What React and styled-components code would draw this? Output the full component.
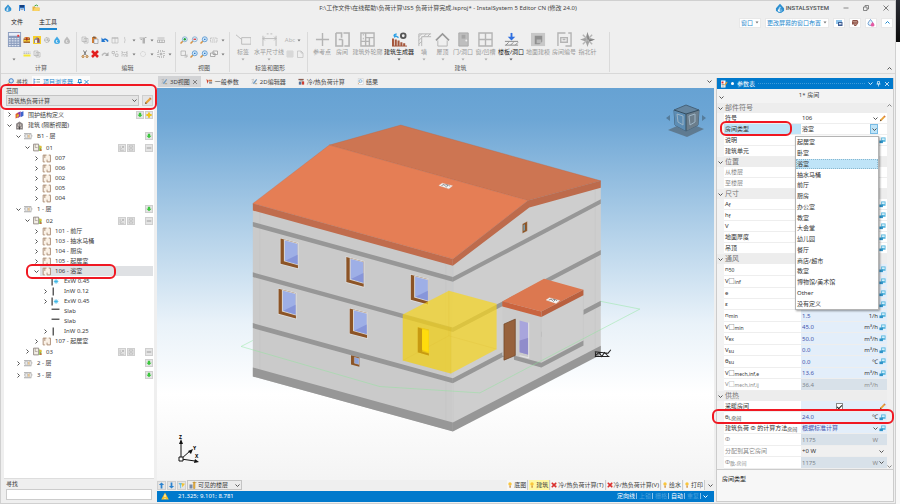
import React from "react";
import styled, { createGlobalStyle, css } from "styled-components";

const Global = createGlobalStyle`
  * { box-sizing: border-box; }
  html, body, #root { margin: 0; height: 100%; }
  body {
    font: 6px/8px "Noto Sans", "Noto Sans CJK SC", sans-serif;
    color: #3c3c3c;
    background: #f8f8f8;
    overflow: hidden;
  }
  button, input, select { font: inherit; color: inherit; margin: 0; padding: 0; border: 0; background: none; border-radius: 0; min-width: 0; }
  button { display: flex; align-items: center; justify-content: center; white-space: nowrap; }
  select { appearance: none; width: 100%; }
  svg { display: block; flex: none; }
`;

/* ---------- icons ---------- */

const glyphs = {
  save: <><path d="M2 2h12v12H2z" fill="#3a86d8" /><path d="M4 2h8v5H4z" fill="#173f7c" /><path d="M4 9h8v5H4z" fill="#e4ecf6" /><path d="M5 11h6" stroke="#567" /></>,
  open: <><path d="M1 14V5h5l1 2h8v7z" fill="#e8b43c" /><path d="M2 14l3-6h11l-3 6z" fill="#fad465" /><path d="M5 4q4-4 7 0" stroke="#43a838" strokeWidth="2" fill="none" /></>,
  logo: <><path d="M8 1L1.5 8.500v4L4 14.500 8 5l4 9.500 2.500-2v-4z" fill="#2c8fd0" /><path d="M8 5q-4 5-4 7a4 3.500 0 008 0q0-2-4-7z" fill="#fff" stroke="#2c8fd0" strokeWidth="1.500" /><path d="M7 9h5M7 11h5M7 13h5M9 8v6M11 8v6" stroke="#2c8fd0" /></>,
  calc: <><path d="M1 0h14v16H1z" fill="#8b9cbd" /><path d="M2 1h12v3H2z" fill="#e8eef8" /><path d="M11 3h2v2h-2z" fill="#e33" /><path d="M2 7h12M2 9.500h12M2 12h12M2 14.500h12" stroke="#dfe6f2" strokeWidth="1.200" strokeDasharray="2 1" /></>,
  book: <><path d="M1 5l13-2v11H1z" fill="#a4662b" /><path d="M1 8h13v3H1z" fill="#f2ce38" /><path d="M3 2h9v4H3z" fill="#d98b3e" /><path d="M6 3h3v6H6z" fill="#b12f22" /></>,
  houseY: <><path d="M0 0h16v16H0z" fill="#f8cf29" /><path d="M2 7l6-5 6 5v7H2z" fill="#8d8d9a" /><path d="M4 8h4v6H4z" fill="#f4eee6" /><path d="M9 4h3v9H9z" fill="#ad4c3d" /></>,
  fan: <><circle cx="8" cy="8" r="5" fill="none" stroke="#b8b8b8" strokeWidth="2" strokeDasharray="5 1" /><path d="M3 8h10M8 4l3 8" stroke="#aaa" strokeWidth="1.500" /></>,
  drop: <><path d="M8 1q-6 7-6 10a6 5 0 0012 0q0-3-6-10z" fill="#41a9e5" /><path d="M8 8q-3 4 1 6" stroke="#fff" strokeWidth="2" fill="none" /></>,
  dropG: <><path d="M8 1q-6 7-6 10a6 5 0 0012 0q0-3-6-10z" fill="#bcbcbc" /><path d="M8 8q-3 4 1 6" stroke="#eee" strokeWidth="2" fill="none" /></>,
  rowY: <><path d="M1 9h14v4H1z" fill="#f6e936" /><path d="M1 4h14M1 7h14" stroke="#8e9199" strokeDasharray="3 1" /></>,
  copy: <path d="M2 2h8v9H2zM6 5h8v9H6zM8 8h4M8 11h4" fill="#eee" stroke="#b0b0b0" strokeWidth="1.300" />,
  paste: <><path d="M2 2h9v12H2z" fill="#d67e32" /><path d="M4 1h5v3H4z" fill="#795d45" /><path d="M6 6h8v9H6z" fill="#ecf2fa" stroke="#777" /></>,
  undo: <><path d="M4 9q5-6 10 2" stroke="#2277d0" strokeWidth="3.500" fill="none" /><path d="M1 3v9h8z" fill="#2277d0" /></>,
  redo: <><path d="M12 9Q7 3 2 11" stroke="#bbb" strokeWidth="3" fill="none" /><path d="M15 4v8H8z" fill="#aaa" /></>,
  cols: <path d="M2 3h12v11H2zM8 3v11M2 5h12" fill="none" stroke="#b8b8b8" strokeWidth="1.300" />,
  brace: <path d="M6 2q3 1 1 4l2 2-2 2q2 3-1 4" fill="none" stroke="#c0c0c0" strokeWidth="1.500" />,
  spray: <><path d="M7 3h5v12H7z" fill="#b2b2b2" /><path d="M1 4h6M3 7h3M12 3h3" stroke="#b2b2b2" strokeWidth="2" /></>,
  table: <path d="M1 4h14M1 8h14v5H1zM5 8v5M10 8v5" fill="none" stroke="#aaa" strokeWidth="1.500" />,
  cut: <><path d="M5 1l5 9M11 1L6 10" stroke="#777" strokeWidth="2" /><circle cx="4" cy="13" r="2" fill="none" stroke="#b97527" strokeWidth="2" /><circle cx="12" cy="13" r="2" fill="none" stroke="#b97527" strokeWidth="2" /></>,
  del: <path d="M2 2l12 12M14 2L2 14" stroke="#e21f1f" strokeWidth="5" />,
  dots: <path d="M2 3h5v4H2zM9 8h5v5H9zM4 10h3M10 3h3" fill="none" stroke="#b6b6b6" strokeWidth="1.500" />,
  align: <path d="M2 2v12M2 5h10v4H2M5 12h9M12 2v12" fill="none" stroke="#b0b0b0" strokeDasharray="3 1" strokeWidth="1.400" />,
  circle: <circle cx="8" cy="8" r="5" fill="none" stroke="#c0c0c0" strokeDasharray="2 1" strokeWidth="1.300" />,
  select: <><path d="M2 2h12v12H2z" fill="none" stroke="#777" strokeWidth="1.500" strokeDasharray="2 2" /><path d="M8 5v6M5 8h6" stroke="#777" /></>,
  zoomIn: <><path d="M1 15l5-5" stroke="#d79345" strokeWidth="3" /><circle cx="9.500" cy="6.500" r="5" fill="#d9ecfa" stroke="#7ca6ca" strokeWidth="1.500" /><path d="M9.500 4v5M7 6.500h5" stroke="#24a239" strokeWidth="2.500" /></>,
  zoomOut: <><path d="M1 15l5-5" stroke="#d79345" strokeWidth="3" /><circle cx="9.500" cy="6.500" r="5" fill="#d9ecfa" stroke="#7ca6ca" strokeWidth="1.500" /><path d="M7 6.500h5" stroke="#d33" strokeWidth="2.500" /></>,
  zoomFit: <><path d="M1 15l5-5" stroke="#d79345" strokeWidth="3" /><circle cx="9.500" cy="6.500" r="5" fill="#cfe6fa" stroke="#4e8fcb" strokeWidth="1.500" /><path d="M8 6.500h3" stroke="#357fc6" strokeWidth="2.500" /></>,
  rect: <path d="M1 4h13v8H1zM4 8h6" fill="none" stroke="#b6b6b6" strokeDasharray="3 1" strokeWidth="1.400" />,
  hand: <path d="M2 2h9v9H2zM10 9l4 4M14 9v5H9" fill="none" stroke="#aaa" strokeWidth="1.400" />,
  windows: <path d="M6 2h9v7H6zM1 6h9v7H1z" fill="#f4f4f4" stroke="#888" strokeWidth="1.300" />,
  sheet: <path d="M2 2h12v12H2zM2 6h12M2 10h12M6 2v12M10 2v12" fill="none" stroke="#bbb" />,
  page: <path d="M3 2h7l4 4v9H3zM10 2v4h4" fill="none" stroke="#bbb" strokeWidth="1.300" />,
  pencil: <><path d="M2 14l1-4 9-9 3 3-9 9z" fill="#e9a23a" /><path d="M2 14l1-4 3 3z" fill="#67513b" /><path d="M11 2l3 3 1-1-3-3z" fill="#c65b4b" /></>,
  find: <><path d="M1 15l5-5" stroke="#e09a46" strokeWidth="3" /><circle cx="9.500" cy="6.500" r="5" fill="#cfe3f7" stroke="#3273bd" strokeWidth="2" /></>,
  list: <><path d="M2 1v13M2 3h3M2 8h3M2 13h3" stroke="#4d86d0" strokeWidth="1.500" /><path d="M7 3h7M7 8h7M7 13h7" stroke="#8aa" strokeWidth="2" /></>,
  defs: <><path d="M1 7l5-3v9l-5 2z" fill="#e25b2e" /><path d="M5 5l5-3v9l-5 3z" fill="#8d3bac" /><path d="M10 4l5-2v8l-5 3z" fill="#3d63cc" /><path d="M3 9l4-2v4l-4 2z" fill="#e2ba2c" /></>,
  building: <><path d="M2 5l6-4 6 4v10H2z" fill="#8a8484" /><path d="M5 6h2v2H5zM9 6h2v2H9zM4 10h2v2H4zM10 10h2v2h-2z" fill="#f2e7dd" /><path d="M7 10h2v5H7z" fill="#4c4848" /></>,
  floor: <><path d="M0 3h13M0 7h15M0 12h13" stroke="#999" strokeWidth="1.500" /><path d="M2 4h4v7H2zM9 4h4v7H9z" fill="#eee" stroke="#aaa" /><path d="M7 5h3v5H7z" fill="#e6c493" /></>,
  unit: <><path d="M1 2h9v12H1z" fill="#f2ede5" stroke="#8c837c" strokeWidth="1.500" /><path d="M4 2v6h4" fill="none" stroke="#8c837c" /><path d="M11 4l4 2v8h-4z" fill="#8bbd44" /><path d="M12 5h3v4h-3z" fill="#e7bb35" /><path d="M13 11h2v3h-2z" fill="#d8503c" /></>,
  room: <><path d="M2 1h13v14H2z" fill="#faf1e6" /><path d="M5 14H2V2h6M12 2h3v12H9M9 14v-4M5 2v5" fill="none" stroke="#a88a73" strokeWidth="1.600" /></>,
  wall: <path d="M4 1v14" stroke="#555" strokeWidth="2.500" />,
  extWall: <><path d="M2 1v14" stroke="#555" strokeWidth="2.500" /><path d="M9 4v8M5 8h8M6 5l6 6M12 5l-6 6" stroke="#34b4e5" strokeWidth="1.500" /></>,
  slab: <path d="M1 4h14" stroke="#555" strokeWidth="2.500" />,
  addG: <path d="M5 2h6v5h4l-7 7-7-7h4z" fill="#3cc63e" />,
  addY: <path d="M5.500 1h5v4.500H15v5h-4.500V15h-5v-4.500H1v-5h4.500z" fill="#efc419" />,
  minus: <path d="M2 8h12" stroke="#999" strokeWidth="2.500" />,
  view: <path d="M3 2v12h10M6 10l6-6M8 4h4v4" fill="none" stroke="#a6a6a6" strokeWidth="1.500" />,
  cross: <path d="M3 2h10v12H3zM4 3l8 10M12 3L4 13" fill="none" stroke="#aaa" strokeWidth="1.300" />,
  twoD: <><path d="M4 12L12 2l2 2-7 10z" fill="#739bc0" /><path d="M1 4l5-1-4 10" fill="none" stroke="#999" /><path d="M9 13h5" stroke="#a97" strokeWidth="2" /></>,
  params: <><path d="M1 2l5 4-3 7z" fill="#d1422f" /><path d="M6 4h8v4H6z" fill="#c97c49" /><path d="M7 9h7v4H7z" fill="#8995a5" /></>,
  load: <><path d="M2 8l6-6 6 6v7H2z" fill="#bbb" /><path d="M1 2h12v3H1z" fill="#8a5c50" /><path d="M9 8h5v7H9z" fill="#d13d31" /><path d="M2 9h5v6H2z" fill="#53719a" /></>,
  result: <><path d="M3 1h11v14H3z" fill="#fff" stroke="#bbb" /><circle cx="8" cy="7" r="3.500" fill="#d7ebfa" stroke="#70a1ca" strokeWidth="1.500" /><path d="M3 13l3-3" stroke="#db9c52" strokeWidth="2" /></>,
  layers: <><path d="M2 2h12v8H2z" fill="#8ec2ea" /><path d="M6 6h9v8H6z" fill="#3f5d91" /><path d="M8 8h5v3H8z" fill="#dce6f4" /></>,
  brain: <><path d="M3 2h9q4 2 2 7l-4 5H6l1-3H2V7z" fill="#8b5147" /><path d="M4 5h8M5 8h8M8 11h3" stroke="#deb9a8" strokeWidth="1.200" /></>,
  drops: <><path d="M7 1q-5 6-5 8a5 4 0 0010 0q0-2-5-8z" fill="#e7f3fb" stroke="#4b86c4" strokeWidth="1.500" /><path d="M11 6q-4 5-4 6a4 3 0 008 0q0-2-4-6z" fill="#e45aa2" /></>,
  chip: <><path d="M5 1h10v10H5z" fill="#56b6de" /><path d="M1 8h8v6H1z" fill="#2f93c7" /><path d="M7 3h6v4H7z" fill="#d3effa" /></>,
  doc: <><path d="M2 1h9v14H2z" fill="#fff" /><path d="M3 3h4v4H3z" fill="#d33" /><path d="M3 9h6M3 12h6" stroke="#788" strokeWidth="1.500" /><path d="M9 8l5-5 1 2-5 7z" fill="#e5a03b" /></>,
  warn: <><path d="M8 1l7.500 14H.5z" fill="#f8c12c" /><path d="M8 5v5M8 12v1.500" stroke="#fff" strokeWidth="2" /></>,
  up: <path d="M8 1l6 6h-4v8H6V7H2z" fill="#2b82cf" />,
  down: <path d="M8 15l6-6h-4V1H6v8H2z" fill="#2b82cf" />,
  filter: <><path d="M1 2h9l-3 6v6H5V8z" fill="#65bfe9" /><path d="M8 2l8 2-6 8z" fill="#f1c434" /></>,
  floors: <><path d="M1 7h6v8H1z" fill="#788aa6" /><path d="M9 2h3v13H9zM7 3h8" fill="#eeb33e" stroke="#b98a2d" /></>,
  bulb: <><circle cx="8" cy="5" r="4.500" fill="#fac63a" /><path d="M6.500 9h3.500v6H6.500z" fill="#cf8a35" /></>,
  redx: <><path d="M2 12L6 3h7l2 9z" fill="#deb0a5" /><path d="M2 2l12 12M14 2L2 14" stroke="#dc3030" strokeWidth="4" /></>,
};

const Glyph = ({ name, size = 8 }) => (
  <svg width={size} height={size} viewBox="0 0 16 16" aria-hidden="true">{glyphs[name]}</svg>
);

const Chevron = ({ to = "down", size = 5, color = "#555" }) => {
  const d = { down: "M1 3l4 4 4-4", up: "M1 7l4-4 4 4", right: "M3 1l4 4-4 4" }[to];
  return <svg width={size} height={size} viewBox="0 0 10 10" aria-hidden="true"><path d={d} fill="none" stroke={color} strokeWidth="2" /></svg>;
};

const Caret = ({ color = "#777" }) => (
  <svg width="4" height="3" viewBox="0 0 8 6" aria-hidden="true"><path d="M1 1h6L4 5z" fill={color} /></svg>
);

/* ---------- frame ---------- */

const Desktop = styled.div`
  display: grid;
  grid-template-columns: minmax(0, 1fr) 4px;
  height: 100vh;
  background: linear-gradient(#2b2d35, #0b0b0b 42px, #f9f9f9 42px);
`;
const Frame = styled.main`
  display: grid;
  grid-column: 1;
  grid-template-rows: 14px 15px 44px minmax(0, 1fr);
  padding-bottom: 1px;
  background: #efefef;
  border: solid #d0d0d0;
  border-width: 1px 1px 2px 1px;
`;
const Bar = styled.header`
  display: grid;
  grid-template-columns: 1fr auto 1fr;
  align-items: center;
`;
const Cluster = styled.div`
  display: flex;
  align-items: center;
  gap: ${(p) => p.$gap ?? 6}px;
  padding: ${(p) => p.$pad ?? "0"};
  justify-content: ${(p) => (p.$end ? "flex-end" : "flex-start")};
`;
const Title = styled.h1`
  margin: 0;
  font-size: 6px;
  font-weight: 400;
  color: #444;
`;
const Brand = styled.span`
  display: flex;
  align-items: center;
  gap: 1px;
  font-family: Roboto, sans-serif;
  font-weight: 500;
  color: #4b4f53;
`;
const MenuRow = styled.nav`
  display: flex;
  justify-content: space-between;
  padding: 0 2px;
`;
const MenuTab = styled.button`
  height: 14px;
  color: #222;
  border-bottom: 2px solid ${(p) => (p.$on ? "#1b86d0" : "transparent")};
`;
const Chip = styled.button`
  height: 10px;
  padding: 0 1px;
  gap: 2px;
  min-width: 12px;
  background: #fff;
  color: #1d87cc;
  border: 1px solid #e8e8e8;
`;

/* ---------- ribbon ---------- */

const Ribbon = styled.div`
  display: flex;
  padding: 2px 0 1px;
  border-bottom: 1px solid #d8d8d8;
`;
const Group = styled.section`
  display: grid;
  grid-template-rows: 1fr 7px;
  flex: ${(p) => (p.$grow ? "1" : `0 0 ${p.$w}px`)};
  padding-left: ${(p) => p.$pad ?? 3}px;
  border-right: ${(p) => (p.$grow ? "0" : "1px solid #dadada")};
  line-height: 7px;
`;
const GroupName = styled.span`
  text-align: center;
  color: #555;
`;
const Tools = styled.div`
  display: flex;
  align-items: flex-start;
`;
const ToolRows = styled.div`
  display: grid;
  grid-template-rows: 10px 10px;
  row-gap: 4px;
  padding-top: 3px;
`;
const ToolRow = styled.div`
  display: flex;
`;
const SmallTool = styled.button`
  width: ${(p) => (p.$caret ? 8 : 10)}px;
  height: 10px;
  color: #b4b4b4;
`;
const BigTool = styled.button`
  flex-direction: column;
  justify-content: flex-start;
  width: ${(p) => p.$w}px;
  gap: 2px;
  color: ${(p) => (p.$on ? "#222" : "#999")};
`;

const SmallRow = ({ items }) => (
  <ToolRow>
    {items.map((n, i) => (
      <SmallTool key={i} $caret={n === "v"} aria-label={n === "v" ? "更多" : n}>
        {n === "v" ? <Caret /> : <Glyph name={n} />}
      </SmallTool>
    ))}
  </ToolRow>
);

const g = "#b4b4b4";
const buildTools = [
  ["参考点", 20, false, false, <path d="M8 1v14M1 8h14" stroke={g} strokeWidth="1.500" />],
  ["房间", 20, false, false, <path d="M1 1h6v5M9 1h6v14h-5M8 8v7H1V1M4 8h4" fill="none" stroke={g} strokeWidth="1.700" />],
  ["建筑外轮廓", 31, false, false, <path d="M1 1h14v14H1zM6 1v14M6 6h9M10 6v9M1 10h9M3 3h1M3 7h1" fill="none" stroke={g} strokeWidth="1.500" />],
  ["建筑生成器", 32, true, true, <><path d="M1 7v8M4 8v7M7 9v6M10 11v4M13 12v3" stroke="#a5563b" strokeWidth="2.200" /><path d="M0 15h16" stroke="#a5563b" /><path d="M7 6L2 3M2 3l3-1M2 3l1 3" fill="none" stroke="#2ea0e5" strokeWidth="1.300" /><circle cx="12" cy="4" r="2.500" fill="none" stroke="#555" strokeWidth="2" /></>],
  ["墙", 18, false, true, <path d="M2 15V2h13M5 15V5h10M2 5l3-3M2 9l3-3M2 13l3-3M7 5l3-3M11 5l3-3" fill="none" stroke={g} />],
  ["屋顶", 19, false, true, <><path d="M1 9l7-7 7 7" fill="none" stroke="#999" strokeWidth="1.700" /><path d="M3 9v6h10V9" fill="none" stroke={g} /></>],
  ["门/洞口", 22, false, true, <><path d="M3 1h10v14H3z" fill="#bebebe" stroke="#aaa" /><path d="M6 3h4v4H6z" fill="#a5a5a5" /><circle cx="11" cy="9" r="1" fill="#eee" /></>],
  ["窗/凹槽", 23, false, true, <path d="M1 1h14v14H1zM8 1v14M1 8h14" fill="none" stroke={g} strokeWidth="1.500" />],
  ["楼板/洞口", 28, true, true, <><path d="M8 1v6" stroke="#2f6fe0" strokeWidth="2" /><path d="M4 5h8L8 9z" fill="#2f6fe0" /><path d="M1 10h14M1 14h14M2 14l3-3M7 14l3-3M12 14l3-3" fill="none" stroke="#888" /></>],
  ["地面建模", 26, false, false, <><path d="M0 1h15v14H0z" fill="#c8c8c8" /><path d="M4 4h8v6l-3 3H4z" fill="#8f8f8f" /><path d="M6 8h5v4H6z" fill="#b9b9b9" /></>],
  ["房间编号", 26, false, false, <path d="M1 15V1h8M12 1h3v14H9M4 6h7v5H4zM6 8h3" fill="none" stroke={g} strokeWidth="1.500" />],
  ["指北针", 21, false, false, <><path d="M8 0l2 6 6 2-6 2-2 6-2-6-6-2 6-2z" fill="#a2a2a2" /><path d="M3 3l10 10M13 3L3 13" stroke="#b5b5b5" strokeWidth="1.500" /><path d="M8 0v8h8l-6 2z" fill="#777" /></>],
];

const Toolbar = () => (
  <Ribbon>
    <Group $w={76} $pad={5}>
      <Tools>
        <BigTool $w={16} aria-label="计算">
          <Glyph name="calc" size={15} />
          <span>&nbsp;</span>
          <Caret />
        </BigTool>
        <ToolRows>
          <SmallRow items={["book", "houseY", "fan", "drop", "dropG"]} />
          <SmallRow items={["rowY", "copy"]} />
        </ToolRows>
      </Tools>
      <GroupName>计算</GroupName>
    </Group>
    <Group $w={99}>
      <ToolRows>
        <SmallRow items={["copy", "paste", "undo", "cols", "brace", "v", "spray", "v", "table"]} />
        <SmallRow items={["cut", "del", "redo", "dots", "align", "v", "circle", "v", "select", "v"]} />
      </ToolRows>
      <GroupName>编辑</GroupName>
    </Group>
    <Group $w={54}>
      <ToolRows>
        <SmallRow items={["zoomIn", "zoomOut", "zoomFit", "rect", "v"]} />
        <SmallRow items={["hand", "zoomFit", "zoomFit", "windows", "v"]} />
      </ToolRows>
      <GroupName>视图</GroupName>
    </Group>
    <Group $w={78}>
      <Tools>
        <BigTool $w={20}>
          <svg width="15" height="15" viewBox="0 0 16 16"><path d="M0 3l6 5M6 6h10v7H6z" fill="none" stroke="#bbb" /></svg>
          标签
          <Caret color="#aaa" />
        </BigTool>
        <BigTool $w={32}>
          <svg width="15" height="15" viewBox="0 0 16 16"><path d="M1 4v11M15 4v11M1 7h14M3 5L1 7l2 2M13 5l2 2-2 2M5 2h2M9 2h2" fill="none" stroke="#bbb" /></svg>
          水平尺寸线
          <Caret color="#aaa" />
        </BigTool>
        <ToolRows>
          <ToolRow>
            <SmallTool>Abc</SmallTool>
            <SmallTool $caret aria-label="更多"><Caret /></SmallTool>
          </ToolRow>
          <SmallRow items={["sheet", "page"]} />
        </ToolRows>
      </Tools>
      <GroupName>标签和图形</GroupName>
    </Group>
    <Group $w={302} $pad={4}>
      <Tools>
        {buildTools.map(([label, w, on, menu, art]) => (
          <BigTool key={label} $w={w} $on={on}>
            <svg width="15" height="15" viewBox="0 0 16 16" aria-hidden="true">{art}</svg>
            {label}
            {menu && <Caret color={on ? "#555" : "#aaa"} />}
          </BigTool>
        ))}
      </Tools>
      <GroupName>建筑</GroupName>
    </Group>
    <Group $grow>
      <span />
      <Cluster $end $pad="0 2px 0 0"><SmallTool $caret aria-label="折叠功能区"><Chevron to="up" /></SmallTool></Cluster>
    </Group>
  </Ribbon>
);

/* ---------- workspace ---------- */

const Workspace = styled.div`
  display: grid;
  grid-template-columns: 154px minmax(0, 1fr) 179px;
  column-gap: 2px;
  padding-top: 2px;
  min-height: 0;
`;
const Column = styled.section`
  display: flex;
  flex-direction: column;
  min-width: 0;
  min-height: 0;
`;
const Mark = styled.span`
  position: absolute;
  inset: ${(p) => p.$inset};
  border: 2px solid #f01822;
  border-radius: 6px;
  pointer-events: none;
  z-index: 4;
`;

/* left panel */
const DockTabs = styled.div`
  display: flex;
  align-items: center;
  height: 11px;
  padding-left: 5px;
  gap: 3px;
`;
const DockTab = styled.button`
  gap: 2px;
  height: 11px;
  padding: 0 1px;
  color: ${(p) => (p.$on ? "#1785cd" : "#555")};
  background: ${(p) => (p.$on ? "#fbfbfb" : "none")};
`;
const Scope = styled.div`
  position: relative;
  margin: 0 1px 0 3px;
  padding: 0 1px 3px 2px;
  & > label { display: block; line-height: 8px; }
`;
const ScopeRow = styled.div`
  display: grid;
  grid-template-columns: 1fr 11px;
  gap: 3px;
`;
const Combo = styled.span`
  display: grid;
  grid-template-columns: 1fr 8px;
  align-items: center;
  height: ${(p) => p.$h ?? 11}px;
  padding-left: 1px;
  background: ${(p) => p.$bg ?? "#e4e4e4"};
  border: 1px solid ${(p) => p.$line ?? "#c4c4c4"};
  & > select { grid-area: 1 / 1 / 2 / 3; line-height: 8px; }
  & > svg { grid-area: 1 / 2; justify-self: center; pointer-events: none; }
`;
const Square = styled.button`
  width: ${(p) => p.$s ?? 8}px;
  height: ${(p) => p.$s ?? 8}px;
  background: #e4e4e4;
  border: 1px solid #cfcfcf;
`;
const Tree = styled.ul`
  flex: 1;
  list-style: none;
  margin: 0 1px 0 3px;
  padding: 0;
  background: #fff;
`;
const Node = styled.li`
  position: relative;
  display: grid;
  grid-template-columns: 8px 1fr auto;
  align-items: center;
  height: ${(p) => p.$h}px;
  padding: 0 1px 0 ${(p) => p.$level * 9 + 1}px;
  white-space: nowrap;
`;
const NodeBody = styled.span`
  display: flex;
  align-items: center;
  gap: 4px;
  height: 100%;
  padding-left: 2px;
  background: ${(p) => (p.$on ? "#dfe1e4" : "none")};
`;
const Expander = styled.button`
  width: 8px;
  height: 8px;
`;
const NodeTools = styled.span`
  display: grid;
  grid-template-columns: repeat(4, 8px);
  gap: 1px;
`;
const Search = styled.div`
  margin: 0 1px 0 3px;
  padding: 1px 2px 2px;
  display: grid;
  gap: 1px;
  border-top: 1px solid #ddd;
  & > input { width: 100%; height: 11px; background: #fff; border: 1px solid #ccc; }
`;

const tree = [
  [0, "right", "defs", "围护结构定义", ["", "", "addG", "addY"], 11],
  [0, "down", "building", "建筑 (隔断视图)", null, 10],
  [1, "down", "floor", "B1 - 层", ["", "", "", "addG"], 12],
  [2, "down", "unit", "01", ["view", "cross", "", "minus"], 11],
  [3, "right", "room", "007"],
  [3, "right", "room", "006"],
  [3, "right", "room", "002"],
  [3, "right", "room", "005"],
  [3, "right", "room", "004"],
  [1, "down", "floor", "1 - 层", ["", "", "", "addG"], 12],
  [2, "down", "unit", "02", ["view", "cross", "", "minus"], 11],
  [3, "right", "room", "101 - 前厅"],
  [3, "right", "room", "103 - 抽水马桶"],
  [3, "right", "room", "104 - 厨房"],
  [3, "right", "room", "105 - 起居室"],
  [3, "down", "room", "106 - 浴室"],
  [4, "", "extWall", "ExW 0.45"],
  [4, "right", "wall", "InW 0.12"],
  [4, "right", "extWall", "ExW 0.45"],
  [4, "", "slab", "Slab"],
  [4, "", "slab", "Slab"],
  [4, "right", "wall", "InW 0.25"],
  [3, "right", "room", "107 - 起居室"],
  [2, "right", "unit", "03", ["view", "cross", "", "minus"], 11],
  [1, "right", "floor", "2 - 层", ["", "", "", "addG"], 12],
  [1, "right", "floor", "3 - 层", ["", "", "", "addG"], 12],
];

const ProjectPanel = () => (
  <Column>
    <DockTabs>
      <DockTab><Glyph name="find" size={7} />寻找</DockTab>
      <DockTab $on><Glyph name="list" size={8} />项目浏览器
        <svg width="14" height="6" viewBox="0 0 28 12"><path d="M7 1h5v6H7zM5 7h9M9.500 7v5M19 2l8 8M27 2l-8 8" fill="none" stroke="#1785cd" strokeWidth="1.700" /></svg>
      </DockTab>
    </DockTabs>
    <Scope>
      <label htmlFor="scope">范围</label>
      <ScopeRow>
        <Combo>
          <select id="scope"><option>建筑热负荷计算</option></select>
          <Chevron />
        </Combo>
        <Square $s={11} aria-label="编辑范围"><Glyph name="pencil" /></Square>
      </ScopeRow>
      <Mark $inset="-3px -3px -1px -4px" />
    </Scope>
    <Tree>
      {tree.map(([level, state, icon, label, tools, h], i) => {
        const on = label.startsWith("106");
        return (
          <Node key={i} $level={level} $h={h ?? 10}>
            {state ? <Expander aria-label={`展开 ${label}`}><Chevron to={state} /></Expander> : <span />}
            <NodeBody $on={on}><Glyph name={icon} size={9} />{label}</NodeBody>
            {tools && (
              <NodeTools>
                {tools.map((t, k) => (t ? <Square key={k} aria-label={t}><Glyph name={t} size={6} /></Square> : <span key={k} />))}
              </NodeTools>
            )}
            {on && <Mark $inset="-2px 38px -3px 22px" />}
          </Node>
        );
      })}
    </Tree>
    <Search>
      <label htmlFor="find">寻找</label>
      <input id="find" />
    </Search>
  </Column>
);

/* center */
const ViewTabs = styled.div`
  display: flex;
  align-items: center;
  height: 12px;
  padding: 0 1px 1px;
  & > :last-child { margin-left: auto; }
`;
const ViewTab = styled.button`
  height: 11px;
  gap: 2px;
  padding: 0 ${(p) => (p.$on ? 3 : 5)}px;
  margin-right: ${(p) => (p.$on ? 0 : 2)}px;
  color: #444;
  background: ${(p) => (p.$on ? "#d2d3d5" : "none")};
`;
const Viewport = styled.div`
  position: relative;
  flex: 1;
  min-height: 0;
  background: linear-gradient(#66a2d3 0%, #6da6d5 8%, #b6d3ea 38%, #e9f2f9 60%, #fff 78%, #f4f4f4 100%);
  & > svg:first-child { width: 100%; height: 100%; }
`;
const Gizmo = styled.svg`
  position: absolute;
  inset: ${(p) => p.$inset};
`;

const Band = ({ y0, y1, t, right }) =>
  right
    ? <path d={`M637 ${y0}L1080 ${y1}v${t}L637 ${y0 + t}z`} fill="#979797" />
    : <path d={`M38 ${y0}L637 ${y1}v${t}L38 ${y0 + t}z`} fill="#979797" />;

const WallWindow = ({ x, y }) => (
  <g transform={`translate(${x} ${y})`}>
    <path d="M-2 -2L54 12V92L-2 77z" fill="#dedede" />
    <path d="M0 0L52 14V89L0 75z" fill="#8c5426" />
    <path d="M10 3L52 14V80L10 68z" fill="#d9d5d2" />
    <path d="M13 6L51 16V77L13 66z" fill="#9eafe6" />
    <path d="M14 66L51 48V77z" fill="#8796da" />
  </g>
);

const House = () => (
  <svg viewBox="-249 -66 1668 1173" role="img" aria-label="建筑三维模型">
    <path d="M38 295L637 460V962L38 798z" fill="#cacaca" />
    <path d="M637 460L866 285 1080 226V720L637 962z" fill="#cecece" />
    <path d="M59 305V800M1063 240V725M616 462V955M637 466V962" stroke="#c0c0c0" fill="none" />
    <Band y0={335} y1={500} t={14} /><Band y0={486} y1={651} t={14} />
    <Band y0={638} y1={803} t={15} /><Band y0={771} y1={936} t={27} />
    <Band right y0={500} y1={267} t={14} /><Band right y0={651} y1={419} t={14} />
    <Band right y0={803} y1={571} t={15} /><Band right y0={936} y1={706} t={27} />
    <path d="M267 105L481 45 1080 212 862 271z" fill="#cd7552" stroke="#b96746" />
    <path d="M38 280L267 105 862 271 637 446z" fill="#e57e55" stroke="#c96b47" />
    <path d="M38 280L637 446V466L38 301z" fill="#c06c4d" />
    <path d="M637 446L862 271 1080 212V233L866 292 637 466z" fill="#bd6b4c" />
    {[[121, 385], [318, 440], [511, 493], [115, 535], [328, 594]].map(([x, y]) => <WallWindow key={`${x}-${y}`} x={x} y={y} />)}
    <path d="M332 734L357 741V769L332 762z" fill="#8c5426" />
    <path d="M342 740L356 744V762L342 758z" fill="#8fa3d8" stroke="#ddd" />
    <path d="M845 341L860 333V362L845 370z" fill="#8c5426" stroke="#ddd" />
    <path d="M848 344l5-2v18l-5 2z" fill="#7b9caa" />
    <path d="M785 586L902 618V770L785 735z" fill="#cbcbcb" />
    <path d="M902 618L1028 553V705L902 770z" fill="#cecece" stroke="#bebebe" />
    <path d="M820 735L902 757 1028 690V705L902 771 820 748z" fill="#979797" />
    <path d="M785 573L910 505 1028 538 902 603z" fill="#dc7850" />
    <path d="M785 573L902 603V620L785 588z" fill="#c9643f" />
    <path d="M902 603L1028 538V555L902 620z" fill="#b9603f" />
    <path d="M837 630L864 638V733L837 725z" fill="#a8a5dc" />
    <path d="M837 690L864 682V733L837 725z" fill="#908ccb" />
    <path d="M864 636V742L837 736" fill="none" stroke="#e4e4e4" strokeWidth="3" />
    <path d="M790 641L824 626V735L790 749z" fill="#97623c" stroke="#6d4222" strokeWidth="2" />
    <path d="M532 650L565 657V735L532 725z" fill="#b58a20" />
    <path d="M543 653L565 659V728L543 718z" fill="#ffd500" />
    <path d="M487 612L625 541 768 580V716L631 789 487 750z" fill="#f8d61c" opacity="0.700" />
    <path d="M487 612L631 652V789L487 750z" fill="#e0ba10" opacity="0.180" />
    <path d="M631 652V789M625 541V676L487 750M625 676L768 716" fill="none" stroke="#d9b92e" opacity="0.600" />
    <path d="M532 651L545 655V724L565 729V735L532 725z" fill="#c79a12" />
    <path d="M545 657L564 662V724L545 718z" fill="#ffdc0c" />
    <path d="M38 690L3 708 418 828 718 847 1197 596 1080 573" fill="none" stroke="#8be69a" strokeWidth="1.500" opacity="0.900" />
    {[[595, 219], [916, 562]].map(([x, y]) => (
      <g key={x} transform={`translate(${x} ${y})`}>
        <path d="M0 7L10 0 41 8 30 17z" fill="#f7f7f7" stroke="#ddd" />
        <path d="M8 7l8-3 4 6M20 4l8 2-6 6M30 6l3 4" fill="none" stroke="#555" strokeWidth="2" />
      </g>
    ))}
    <path d="M1062 724l40 4 8-10M1063 736l12-10 8 12 8-12 12 12M1062 738h44M1064 726v10" fill="none" stroke="#222" strokeWidth="3" />
  </svg>
);

const BottomTabs = styled.div`
  display: flex;
  align-items: center;
  justify-content: space-between;
  height: 11px;
`;
const LayerTab = styled.button`
  height: 10px;
  gap: 1px;
  padding: 0 1px 0 0;
  background: ${(p) => (p.$on ? "#fff7a2" : "#f6f6f6")};
  border-right: 1px solid #ccc;
`;
const Status = styled.footer`
  display: flex;
  align-items: center;
  justify-content: space-between;
  height: 11px;
  padding: 0 6px 0 4px;
  color: #fff;
  background: #0079cc;
`;
const Mode = styled.button`
  color: ${(p) => (p.$on ? "#fff" : "#4aa0dc")};
  padding-right: 1px;
  border-right: 1px solid #8cc4ea;
  line-height: 6px;
`;

const ModelView = () => (
  <Column>
    <ViewTabs>
      <ViewTab $on><Glyph name="twoD" size={7} />3D视图
        <svg width="6" height="6" viewBox="0 0 12 12"><path d="M2 2l8 8M10 2l-8 8" stroke="#666" strokeWidth="1.500" /></svg>
      </ViewTab>
      <ViewTab><Glyph name="params" size={7} />一般参数</ViewTab>
      <ViewTab><Glyph name="twoD" size={7} />2D编辑器</ViewTab>
      <ViewTab><Glyph name="load" size={7} />冷/热负荷计算</ViewTab>
      <ViewTab><Glyph name="result" size={7} />结果</ViewTab>
      <SmallTool $caret aria-label="更多视图"><Chevron /></SmallTool>
    </ViewTabs>
    <Viewport>
      <House />
      <Gizmo $inset="14px 6px auto auto" width="44" height="36" viewBox="0 0 44 36">
        <path d="M4 28L22 20l18 7-17 8z" fill="#53616c" opacity="0.650" />
        <path d="M10 8L22 3l13 5-1 15-12 6-11-6z" fill="#65859f" stroke="#46637b" />
        <path d="M10 8l12 4v17l-11-6z" fill="#5d8db4" />
        <path d="M22 12l13-4-1 15-12 6z" fill="#6c7e8c" />
        <path d="M13 12l6 2v9l-5-3zM25 14l6-2v8l-5 3z" fill="none" stroke="#9cb4c6" />
        <path d="M10 8l12 4 13-4M22 12v17" fill="none" stroke="#354e61" />
        <path d="M2 16l4-3v6zM42 16l-4-3v6z" fill="#557c9b" />
      </Gizmo>
      <Gizmo $inset="auto auto 15px 18px" width="30" height="30" viewBox="0 0 30 30">
        <path d="M6 24V8M6 24l14 2M6 24l9-8" stroke="#111" />
        <path d="M6 4l2 5H4zM24 27l-5 1 1-4zM18 14l-2 5-3-3z" fill="#111" />
        <path d="M4 22h4v4H4z" fill="#fff" stroke="#111" />
        <text x="4" y="4" fontSize="5" fontWeight="700">Z</text>
        <text x="18" y="15" fontSize="5" fontWeight="700">Y</text>
        <text x="20" y="23" fontSize="5" fontWeight="700">X</text>
      </Gizmo>
    </Viewport>
    <BottomTabs>
      <Cluster $gap={1}>
        {["up", "down", "filter"].map((n) => <Square key={n} $s={9} aria-label={n}><Glyph name={n} size={7} /></Square>)}
        <Combo $h={10} $bg="#ececec">
          <LayerSelect aria-label="可见的楼层"><option>可见的楼层</option></LayerSelect>
          <FloorIcon><Glyph name="floors" size={8} /></FloorIcon>
          <Chevron />
        </Combo>
      </Cluster>
      <Cluster $gap={1}>
        <LayerTab><Glyph name="bulb" size={6} />底图</LayerTab>
        <LayerTab $on><Glyph name="bulb" size={6} />建筑</LayerTab>
        <LayerTab><Glyph name="redx" size={6} />冷/热负荷计算(T)</LayerTab>
        <LayerTab><Glyph name="redx" size={6} />冷/热负荷计算(V)</LayerTab>
        <LayerTab><Glyph name="bulb" size={6} />给水</LayerTab>
        <LayerTab><Glyph name="bulb" size={6} />打印</LayerTab>
        <SmallTool $caret aria-label="更多图层"><Chevron /></SmallTool>
      </Cluster>
    </BottomTabs>
    <Status>
      <Cluster $gap={9}><Glyph name="warn" /><span>21.325; 9.101; 8.781</span></Cluster>
      <Cluster $gap={2}>
        <Mode $on>定向线</Mode><Mode>上锁</Mode><Mode>栅格</Mode><Mode $on>自动</Mode><Mode>重复</Mode>
        <Chevron color="#fff" />
      </Cluster>
    </Status>
  </Column>
);
const LayerSelect = styled.select`
  padding: 0 12px 0 9px;
`;
const FloorIcon = styled.span`
  grid-area: 1 / 1;
  pointer-events: none;
`;

/* right panel */
const Inspector = styled(Column)`
  margin-top: 2px;
  margin-right: 1px;
  background: #f3f3f3;
  border: 1px solid #ccc;
  border-top: 0;
`;
const InspectorHead = styled.header`
  display: flex;
  align-items: center;
  gap: 3px;
  height: 11px;
  padding: 0 3px;
  color: #fff;
  background: #0079cc;
`;
const Dotted = styled.span`
  flex: 1;
  border-top: 1px dotted #3e9bdb;
`;
const Dot = styled.span`
  width: 3px;
  height: 3px;
  border-radius: 50%;
  background: #fff;
`;
const Subject = styled.div`
  display: grid;
  grid-template-columns: 8px 1fr;
  height: 14px;
  padding-top: 2px;
  text-align: center;
  & > svg { align-self: end; margin: 0 0 3px 2px; }
`;
const GridArea = styled.div`
  display: grid;
  grid-template-columns: 1fr 6px;
`;
const Scroll = styled.div`
  display: flex;
  flex-direction: column;
  justify-content: space-between;
  background: #f0f0f0;
`;
const SectionHead = styled.button`
  width: 100%;
  height: 10px;
  justify-content: flex-start;
  gap: 2px;
  padding-left: 1px;
  font-size: 7px;
  color: #777;
  background: #ededed;
`;
const Prop = styled.div`
  position: relative;
  display: grid;
  grid-template-columns: 77px 1fr;
  height: ${(p) => (p.$tall ? 12 : 11)}px;
  margin-left: 7px;
  border-bottom: 1px solid #eee;
  background: #fff;
  color: ${(p) => (p.$dim ? "#8a8a8a" : "#333")};
`;
const PropName = styled.label`
  padding-left: 1px;
  line-height: 10px;
  white-space: nowrap;
  background: ${(p) => (p.$on ? "#bfe4f8" : "none")};
  & sub { font-size: 5px; line-height: 5px; vertical-align: -1px; }
`;
const tones = { blue: "#e3eefa", grey: "#d8e1e9", plain: "#f0f0f0" };
const PropValue = styled.div`
  display: grid;
  grid-template-columns: 1fr auto 8px;
  align-items: center;
  gap: 1px;
  padding-left: 1px;
  background: ${(p) => tones[p.$tone] ?? "#fff"};
  & > input, & > select { color: ${(p) => (p.$tone === "blue" ? "#4453ac" : p.$tone === "grey" ? "#7d858d" : "#333")}; width: 100%; }
`;
const Tick = styled.input`
  appearance: none;
  justify-self: center;
  && { width: 7px; height: 7px; }
  border: 1px solid #888;
  background: #fff linear-gradient(#fff, #fff);
  display: grid;
  place-items: center;
  &:checked::after {
    content: "";
    width: 2px;
    height: 4px;
    margin-bottom: 1px;
    border: solid #222;
    border-width: 0 1px 1px 0;
    transform: rotate(45deg);
  }
`;
const OpenMark = styled.button`
  width: 8px;
  height: 10px;
  border: 1px solid #78bbe4;
  background: #bfe4f8;
`;
const Options = styled.ul`
  position: absolute;
  z-index: 3;
  top: 12px;
  left: 71px;
  right: 8px;
  height: 174px;
  display: grid;
  grid-auto-rows: 1fr;
  margin: 0;
  padding: 0;
  list-style: none;
  color: #333;
  background: #fff;
  border: 1px solid #b4b4b4;
  box-shadow: 1px 1px 2px #0006;
`;
const Option = styled.li`
  display: flex;
  align-items: center;
  padding-left: 1px;
  ${(p) => p.$on && css`background: #bfe4f8; outline: 1px dotted #8ab8cf; outline-offset: -1px;`}
`;
const Description = styled.p`
  flex: 1;
  margin: 0;
  padding: 5px 5px;
  border-top: 1px solid #ccc;
  background: #f7f7f7;
  color: #222;
`;

const roomTypes = ["起居室", "卧室", "浴室", "抽水马桶", "前厅", "厨房", "办公室", "教室", "大会堂", "幼儿园", "餐厅", "商店/超市", "教室", "博物馆/美术馆", "Other", "没有定义"];

const S = (base, sub) => <>{base}<sub>{sub}</sub></>;
const sections = [
  ["部件符号", [
    { n: "符号", v: "106", end: "pencil", drop: true },
    { n: "房间类型", v: "浴室", open: true },
    { n: "说明", v: "", end: "chip" },
    { n: "建筑单元", v: "" },
  ]],
  ["位置", [{ n: "从楼层", v: "", dim: true }, { n: "至楼层", v: "", dim: true }]],
  ["尺寸", [
    { n: S("A", "f"), v: "", end: "chip" }, { n: S("h", "f"), v: "", end: "chip" }, { n: "V", v: "", end: "chip" },
    { n: "地面厚度", v: "", end: "chip" }, { n: "吊顶", v: "", end: "chip" },
  ]],
  ["通风", [
    { n: S("n", "50"), v: "", end: "chip", tall: true, tone: "blue" },
    { n: S("V□", "inf"), v: "", end: "chip", tall: true, tone: "blue" },
    { n: "e", v: "", end: "chip", tone: "blue" },
    { n: "ε", v: "", end: "chip", tone: "blue" },
    { n: S("n", "min"), v: "1.5", u: "1/h", end: "chip", tall: true, tone: "blue" },
    { n: S("V□", "min"), v: "45.0", u: "m³/h", end: "chip", tone: "blue" },
    { n: S("V", "ex"), v: "50.0", u: "m³/h", end: "chip", tall: true, tone: "blue" },
    { n: S("V", "su"), v: "0.0", u: "m³/h", end: "chip", tone: "blue" },
    { n: S("θ", "su"), v: "0.0", u: "℃", end: "chip", tall: true, tone: "blue" },
    { n: S("V□", "mech,inf,e"), v: "13.6", u: "m³/h", end: "chip", tone: "blue" },
    { n: S("V□", "mech,inf,ij"), v: "36.4", u: "m³/h", tall: true, tone: "grey", dim: true },
  ]],
  ["供热", [
    { n: "采暖房间", check: true, end: "pencil", tone: "blue" },
    { n: S("θ", "i,房间"), v: "24.0", u: "℃", end: "chip", tone: "blue", mark: true },
    { n: S("建筑负荷 Φ 的计算方法", "房间"), v: "根据标准计算", drop: true, end: "chip", tone: "blue" },
    { n: "Φ", v: "1175", u: "W", tall: true, tone: "grey", dim: true },
    { n: "分配到其它房间", v: "+0 W", tone: "plain", endDrop: true, dim: true },
    { n: S("Φ", "散,房间"), v: "1175", u: "W", endDrop: true, tall: true, tone: "grey", dim: true },
  ]],
];

const PropRow = ({ row, id }) => (
  <Prop $tall={row.tall} $dim={row.dim}>
    <PropName htmlFor={id} $on={row.open}>{row.n}</PropName>
    <PropValue $tone={row.tone}>
      {row.check ? <Tick id={id} type="checkbox" defaultChecked />
        : row.drop && row.tone ? <select id={id}><option>{row.v}</option></select>
        : <input id={id} defaultValue={row.v} />}
      {row.drop ? <Chevron /> : row.open ? <OpenMark aria-label="打开列表"><Chevron /></OpenMark> : <span>{row.u}</span>}
      {row.endDrop ? <Chevron /> : row.end ? <Glyph name={row.end} size={7} /> : <span />}
    </PropValue>
    {row.open && (
      <>
        <Options role="listbox" aria-label="房间类型">
          {roomTypes.map((t, i) => <Option key={i} role="option" aria-selected={i === 2} $on={i === 2}>{t}</Option>)}
        </Options>
        <Mark $inset="-3px 95px -2px -4px" />
      </>
    )}
    {row.mark && <Mark $inset="-3px -7px -2px -12px" />}
  </Prop>
);

const ParameterPanel = () => (
  <Inspector>
    <InspectorHead>
      <Glyph name="doc" size={8} /><Dot />参数表
      <Dotted />
      <Chevron color="#d6ecfa" />
      <svg width="5" height="6" viewBox="0 0 10 12"><path d="M3 1h4v5H3zM1 6h8M5 6v5" fill="none" stroke="#d6ecfa" strokeWidth="1.500" /></svg>
      <svg width="6" height="6" viewBox="0 0 12 12"><path d="M2 2l8 8M10 2l-8 8" stroke="#fff" strokeWidth="1.500" /></svg>
    </InspectorHead>
    <Subject><Chevron />1* 房间</Subject>
    <GridArea>
      <div>
        {sections.map(([name, rows], s) => (
          <React.Fragment key={name}>
            <SectionHead><Chevron />{name}</SectionHead>
            {rows.map((row, i) => <PropRow key={i} row={row} id={`p${s}-${i}`} />)}
          </React.Fragment>
        ))}
      </div>
      <Scroll><Chevron to="up" color="#888" /><Chevron color="#888" /></Scroll>
    </GridArea>
    <Description>房间类型</Description>
  </Inspector>
);

export default function App() {
  return (
    <Desktop>
      <Global />
      <Frame>
        <Bar>
          <Cluster $pad="0 0 0 3px">
            <Glyph name="logo" /><Glyph name="save" /><Glyph name="open" />
          </Cluster>
          <Title>F:\工作文件\在线帮助\负荷计算\IS5 负荷计算完成.isproj* - InstalSystem 5 Editor CN (修改 24.0)</Title>
          <Cluster $end $gap={14} $pad="0 6px 0 0">
            <Brand><Glyph name="logo" size={10} />INSTALSYSTEM</Brand>
            <button aria-label="最小化"><svg width="6" height="6" viewBox="0 0 12 12"><path d="M1 6h10" stroke="#666" strokeWidth="1.500" /></svg></button>
            <button aria-label="还原"><svg width="6" height="6" viewBox="0 0 12 12"><path d="M1 4h7v7H1zM4 4V1h7v7H8" fill="none" stroke="#666" strokeWidth="1.500" /></svg></button>
            <button aria-label="关闭"><svg width="6" height="6" viewBox="0 0 12 12"><path d="M1 1l10 10M11 1L1 11" stroke="#555" strokeWidth="1.500" /></svg></button>
          </Cluster>
        </Bar>
        <MenuRow>
          <Cluster $gap={16} $pad="0 0 0 8px">
            <MenuTab>文件</MenuTab>
            <MenuTab $on>主工具</MenuTab>
          </Cluster>
          <Cluster $gap={4}>
            <Chip>窗口 <Caret /></Chip>
            <Chip>更改屏幕的窗口布置 <Caret /></Chip>
            <Chip aria-label="图层"><Glyph name="layers" /></Chip>
            <Chip aria-label="助手"><Glyph name="brain" /></Chip>
            <Chip aria-label="颜色"><Glyph name="drops" /></Chip>
            <Chip aria-label="收起"><Chevron to="up" color="#1d87cc" /></Chip>
          </Cluster>
        </MenuRow>
        <Toolbar />
        <Workspace>
          <ProjectPanel />
          <ModelView />
          <ParameterPanel />
        </Workspace>
      </Frame>
    </Desktop>
  );
}
